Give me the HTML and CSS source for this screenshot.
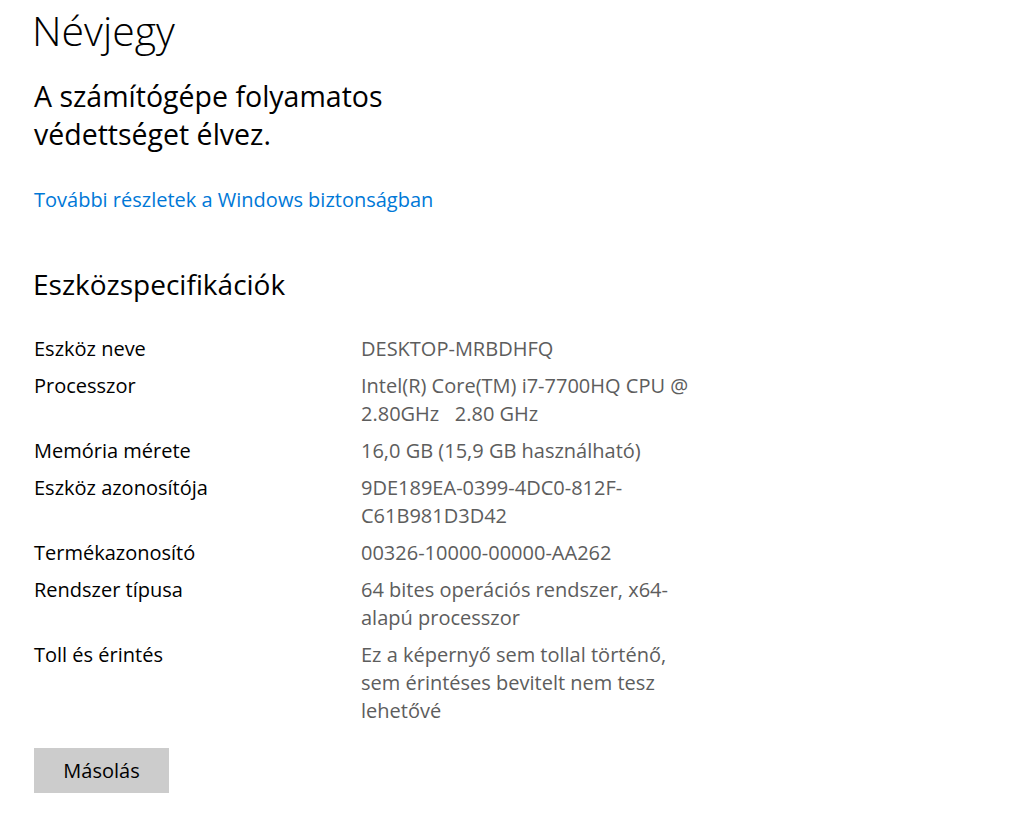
FILE: index.html
```html
<!DOCTYPE html>
<html lang="hu">
<head>
<meta charset="utf-8">
<title>Névjegy</title>
<link rel="stylesheet" href="styles.css">
</head>
<body>
<main class="page">
  <h1 class="title">Névjegy</h1>
  <p class="status">A számítógépe folyamatos<br>védettséget élvez.</p>
  <a class="link" href="#">További részletek a Windows biztonságban</a>
  <h2 class="section">Eszközspecifikációk</h2>
  <dl class="specs">
    <div class="row"><dt>Eszköz neve</dt><dd>DESKTOP-MRBDHFQ</dd></div>
    <div class="row"><dt>Processzor</dt><dd>Intel(R) Core(TM) i7-7700HQ CPU @<br>2.80GHz&nbsp;&nbsp;&nbsp;2.80 GHz</dd></div>
    <div class="row"><dt>Memória mérete</dt><dd>16,0 GB (15,9 GB használható)</dd></div>
    <div class="row"><dt>Eszköz azonosítója</dt><dd>9DE189EA-0399-4DC0-812F-<br>C61B981D3D42</dd></div>
    <div class="row"><dt>Termékazonosító</dt><dd>00326-10000-00000-AA262</dd></div>
    <div class="row"><dt>Rendszer típusa</dt><dd>64 bites operációs rendszer, x64-<br>alapú processzor</dd></div>
    <div class="row"><dt>Toll és érintés</dt><dd>Ez a képernyő sem tollal történő,<br>sem érintéses bevitelt nem tesz<br>lehetővé</dd></div>
  </dl>
  <button class="copy" type="button">Másolás</button>
</main>
</body>
</html>
```
FILE: styles.css
```css
html, body {
  margin: 0;
  padding: 0;
  background: #ffffff;
}
body {
  font-family: "Open Sans", "Noto Sans", "Liberation Sans", sans-serif;
  color: #000000;
}
.page {
  display: flex;
  flex-direction: column;
  align-items: flex-start;
  padding: 0 0 0 34px;
}
.title {
  margin: 4px 0 0 -2px;
  font-size: 41px;
  font-weight: 300;
  line-height: 52px;
}
.status {
  margin: 21px 0 0 0;
  font-size: 28.5px;
  font-weight: 400;
  line-height: 38px;
}
.link {
  margin: 33px 0 0 0;
  font-size: 20px;
  line-height: 28px;
  color: #0078d7;
  text-decoration: none;
}
.section {
  margin: 50px 0 0 -1px;
  font-size: 28px;
  font-weight: 400;
  line-height: 40px;
}
.specs {
  margin: 31px 0 0 0;
  display: flex;
  flex-direction: column;
  gap: 9px;
}
.row {
  display: grid;
  grid-template-columns: 327px 350px;
  font-size: 20px;
  line-height: 28px;
}
.row dt {
  margin: 0;
  color: #000000;
}
.row dd {
  margin: 0;
  color: #5d5d5d;
}
.copy {
  margin: 23px 0 0 0;
  width: 135px;
  height: 45px;
  border: none;
  background: #cccccc;
  font-family: inherit;
  font-size: 20px;
  color: #000000;
  padding: 0;
}
```
